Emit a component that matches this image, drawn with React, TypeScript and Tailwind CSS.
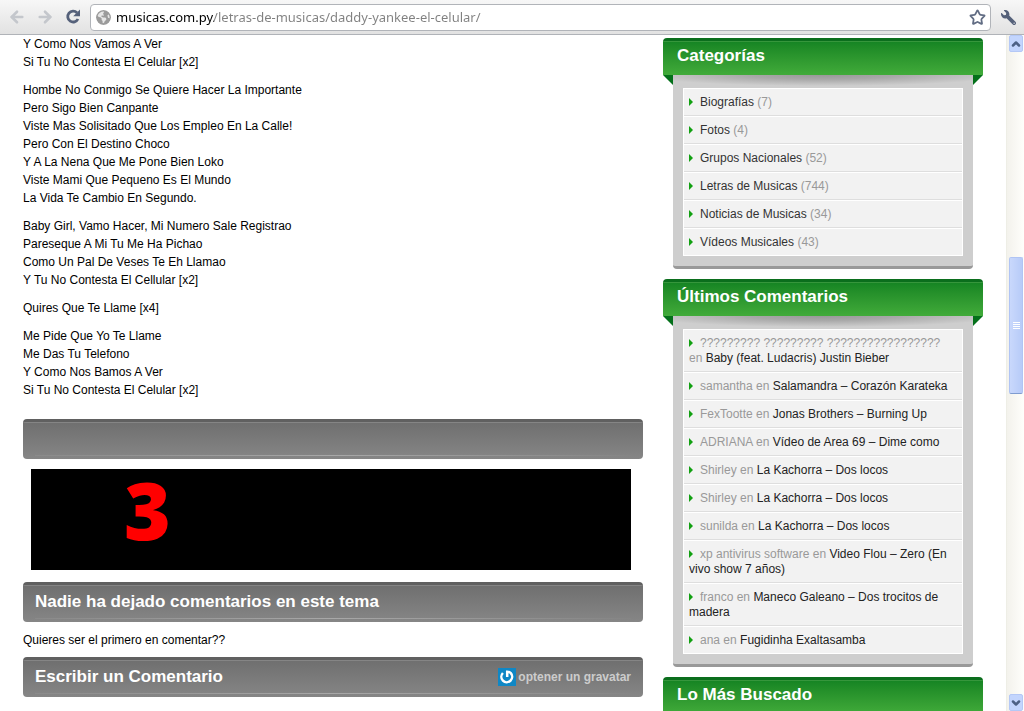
import React, { useState } from "react";
import { FaWrench } from "react-icons/fa";
import { FaEarthAmericas } from "react-icons/fa6";
import { ArrowLeft, ArrowRight, Star, ChevronUp, ChevronDown } from "lucide-react";

interface Comentario {
    autor: string;
    tema: string;
}

const letra: string[][] = [
    ["Y Como Nos Vamos A Ver", "Si Tu No Contesta El Celular [x2]"],
    [
        "Hombe No Conmigo Se Quiere Hacer La Importante",
        "Pero Sigo Bien Canpante",
        "Viste Mas Solisitado Que Los Empleo En La Calle!",
        "Pero Con El Destino Choco",
        "Y A La Nena Que Me Pone Bien Loko",
        "Viste Mami Que Pequeno Es El Mundo",
        "La Vida Te Cambio En Segundo.",
    ],
    [
        "Baby Girl, Vamo Hacer, Mi Numero Sale Registrao",
        "Pareseque A Mi Tu Me Ha Pichao",
        "Como Un Pal De Veses Te Eh Llamao",
        "Y Tu No Contesta El Cellular [x2]",
    ],
    ["Quires Que Te Llame [x4]"],
    [
        "Me Pide Que Yo Te Llame",
        "Me Das Tu Telefono",
        "Y Como Nos Bamos A Ver",
        "Si Tu No Contesta El Celular [x2]",
    ],
];

const categorias: Array<[string, number]> = [
    ["Biografías", 7],
    ["Fotos", 4],
    ["Grupos Nacionales", 52],
    ["Letras de Musicas", 744],
    ["Noticias de Musicas", 34],
    ["Vídeos Musicales", 43],
];

const comentarios: Comentario[] = [
    { autor: "????????? ????????? ?????????????????", tema: "Baby (feat. Ludacris) Justin Bieber" },
    { autor: "samantha", tema: "Salamandra – Corazón Karateka" },
    { autor: "FexTootte", tema: "Jonas Brothers – Burning Up" },
    { autor: "ADRIANA", tema: "Vídeo de Area 69 – Dime como" },
    { autor: "Shirley", tema: "La Kachorra – Dos locos" },
    { autor: "Shirley", tema: "La Kachorra – Dos locos" },
    { autor: "sunilda", tema: "La Kachorra – Dos locos" },
    { autor: "xp antivirus software", tema: "Video Flou – Zero (En vivo show 7 años)" },
    { autor: "franco", tema: "Maneco Galeano – Dos trocitos de madera" },
    { autor: "ana", tema: "Fugidinha Exaltasamba" },
];

const Toolbar: React.FC = () => {
    const [url, setUrl] = useState("musicas.com.py/letras-de-musicas/daddy-yankee-el-celular/");

    return (
        <header className="flex h-[35px] shrink-0 items-center border-b border-[#b0b3b8] bg-linear-to-b from-[#f7f7f7] to-[#e2e2e2] px-2">
            <button aria-label="Atrás" className="flex w-7 text-[#c4c7cc]">
                <ArrowLeft size={18} strokeWidth={3.5} />
            </button>
            <button aria-label="Adelante" className="flex w-7 text-[#c4c7cc]">
                <ArrowRight size={18} strokeWidth={3.5} />
            </button>
            <button aria-label="Recargar" className="flex w-[26px]">
                <svg width="18" height="18" viewBox="0 0 18 18">
                    <path d="M13 4.8A5.4 5.4 0 1 0 14 11" fill="none" stroke="#55617a" strokeWidth="2.8" />
                    <path d="M16 1.5V8.2H9.2z" fill="#55617a" />
                </svg>
            </button>
            <div className="flex h-[27px] flex-1 items-center rounded-sm border border-[#b1b4b9] bg-white pr-1 pl-[5px]">
                <FaEarthAmericas size={15} className="shrink-0 rounded-full bg-[#e6e6e6] text-[#9b9b9b]" />
                <input
                    aria-label="Dirección"
                    value={url}
                    onChange={(e) => setUrl(e.target.value)}
                    className="ml-[5px] min-w-0 flex-1 bg-linear-to-r from-black from-[98px] to-[#808080] to-[98px] bg-clip-text font-['Noto_Sans',sans-serif] text-[13px] leading-5 text-transparent caret-black outline-none"
                />
                <button aria-label="Agregar a favoritos" className="flex">
                    <Star size={17} strokeWidth={2.5} color="#626d84" />
                </button>
            </div>
            <button aria-label="Herramientas" className="ml-[10px] flex text-[#55617a]">
                <FaWrench size={15} className="-scale-x-100" />
            </button>
        </header>
    );
};

const Barra: React.FC<{ children?: React.ReactNode }> = ({ children }) => (
    <div className="flex h-10 flex-col overflow-hidden rounded-sm border-t-3 border-[#606060] bg-linear-to-b from-[#6f6f6f] to-[#868686]">
        <div className="flex flex-1 items-center justify-between border-t border-[#858585] px-3">{children}</div>
        <div className="mx-3 mb-[3px] h-px shrink-0 bg-linear-to-r from-[#8a8a8a] via-[#a8a8a8] to-[#858585]"></div>
    </div>
);

const Widget: React.FC<{ titulo: string; children?: React.ReactNode }> = ({ titulo, children }) => (
    <section className="mb-[10px]">
        <div className="relative h-[37px] rounded-t-sm border-t-3 border-[#0b6e1d] bg-linear-to-b from-[#148423] to-[#41ab3a]">
            <h2 className="border-t border-[#36963c] px-[14px] pt-[2px] text-[17px] leading-6 font-bold text-white">{titulo}</h2>
            {/* pliegues de la cinta */}
            <span className="absolute top-full left-0 border-t-10 border-l-10 border-t-[#04701a] border-l-transparent"></span>
            <span className="absolute top-full right-0 border-t-10 border-r-10 border-t-[#04701a] border-r-transparent"></span>
        </div>
        <div className="mx-[10px] rounded-b-sm border-b-3 border-[#999999] bg-[#cecece] bg-[radial-gradient(ellipse_180px_11px_at_50%_0,#999999,#a8a8a8_40%,#cecece)] px-[10px] pt-[13px] pb-[10px]">
            <ul className="border-x border-white bg-[#f2f2f2]">{children}</ul>
        </div>
    </section>
);

const Item: React.FC<{ children: React.ReactNode }> = ({ children }) => (
    <li className="border-t border-b border-t-white border-b-[#dedede] pt-[6px] pr-[10px] pb-[5px] pl-[5px] text-[12px] leading-[15px] text-[#999999] last:border-b-white">
        <svg width="11" height="8" viewBox="0 0 11 8" className="inline-block align-baseline">
            <path d="M0 0L4 4L0 8z" fill="#12a012" />
        </svg>
        {children}
    </li>
);

const Scrollbar: React.FC = () => (
    <div className="flex w-[18px] shrink-0 flex-col border-l border-[#eeeee6] bg-linear-to-r from-[#f3f2ec] to-[#fefefb] pr-px pl-[2px]">
        <button aria-label="Subir" className="flex h-[17px] items-center justify-center rounded-xs border border-[#b4c8f6] bg-[#c3d5fd] text-[#4d6185]">
            <ChevronUp size={12} strokeWidth={5} />
        </button>
        <div className="grow-[205]"></div>
        <div className="flex h-[137px] flex-col items-center justify-center gap-px rounded-xs border border-[#b0c4f4] border-b-[#7f9cd0] bg-linear-to-r from-[#c9d8fc] to-[#b7cbf8]">
            <span className="h-px w-[7px] bg-white"></span>
            <span className="h-px w-[7px] bg-white"></span>
            <span className="h-px w-[7px] bg-white"></span>
            <span className="h-px w-[7px] bg-white"></span>
        </div>
        <div className="grow-[300]"></div>
        <button aria-label="Bajar" className="flex h-[17px] items-center justify-center rounded-xs border border-[#b4c8f6] bg-[#c3d5fd] text-[#4d6185]">
            <ChevronDown size={12} strokeWidth={5} />
        </button>
    </div>
);

const App: React.FC = () => {
    return (
        <div className="flex h-screen flex-col overflow-hidden bg-white font-['Liberation_Sans',Arial,sans-serif]">
            <Toolbar />
            <div className="flex min-h-0 flex-1">
                <div className="flex-1 overflow-hidden">
                    <div className="mx-auto flex max-w-[960px] gap-5">
                        <main className="min-w-0 flex-1 text-[12px] leading-[18px] text-black">
                            <article className="mb-5 flex flex-col gap-[10px]">
                                {letra.map((estrofa, index) => (
                                    <p key={index}>
                                        {estrofa.map((linea, i) => (
                                            <span key={i} className="block">{linea}</span>
                                        ))}
                                    </p>
                                ))}
                            </article>
                            <Barra />
                            <div className="mx-2 mt-[10px] mb-3 h-[101px] max-w-[600px] bg-black pl-[93px] font-['Noto_Sans',sans-serif] text-[80px] leading-[80px] font-black text-[#ff0000]">
                                3
                            </div>
                            <Barra>
                                <h2 className="text-[17px] leading-6 font-bold text-white">Nadie ha dejado comentarios en este tema</h2>
                            </Barra>
                            <p className="my-2 pt-px">Quieres ser el primero en comentar??</p>
                            <Barra>
                                <h2 className="text-[17px] leading-6 font-bold text-white">Escribir un Comentario</h2>
                                <a href="#gravatar" className="flex items-center gap-[2px] text-[12px] font-bold text-[#cccccc]">
                                    <svg width="18" height="18" viewBox="0 0 18 18">
                                        <rect width="18" height="18" fill="#0f87c5" />
                                        <path d="M4.9 5A5.4 5.4 0 1 0 12.8 5.2C11.8 4.2 10.6 3.7 9.2 3.7V9" fill="none" stroke="#fff" strokeWidth="2.5" />
                                    </svg>
                                    optener un gravatar
                                </a>
                            </Barra>
                        </main>
                        <aside className="w-80 shrink-0 pt-[3px]">
                            <Widget titulo="Categorías">
                                {categorias.map(([nombre, total]) => (
                                    <Item key={nombre}>
                                        <a href="#categoria" className="text-[#333333]">{nombre}</a>
                                        {` (${total})`}
                                    </Item>
                                ))}
                            </Widget>
                            <Widget titulo="Últimos Comentarios">
                                {comentarios.map((comentario, index) => (
                                    <Item key={index}>
                                        {`${comentario.autor} en `}
                                        <a href="#tema" className="text-[#222222]">{comentario.tema}</a>
                                    </Item>
                                ))}
                            </Widget>
                            <Widget titulo="Lo Más Buscado" />
                        </aside>
                    </div>
                </div>
                <Scrollbar />
            </div>
        </div>
    );
};

export default App;
